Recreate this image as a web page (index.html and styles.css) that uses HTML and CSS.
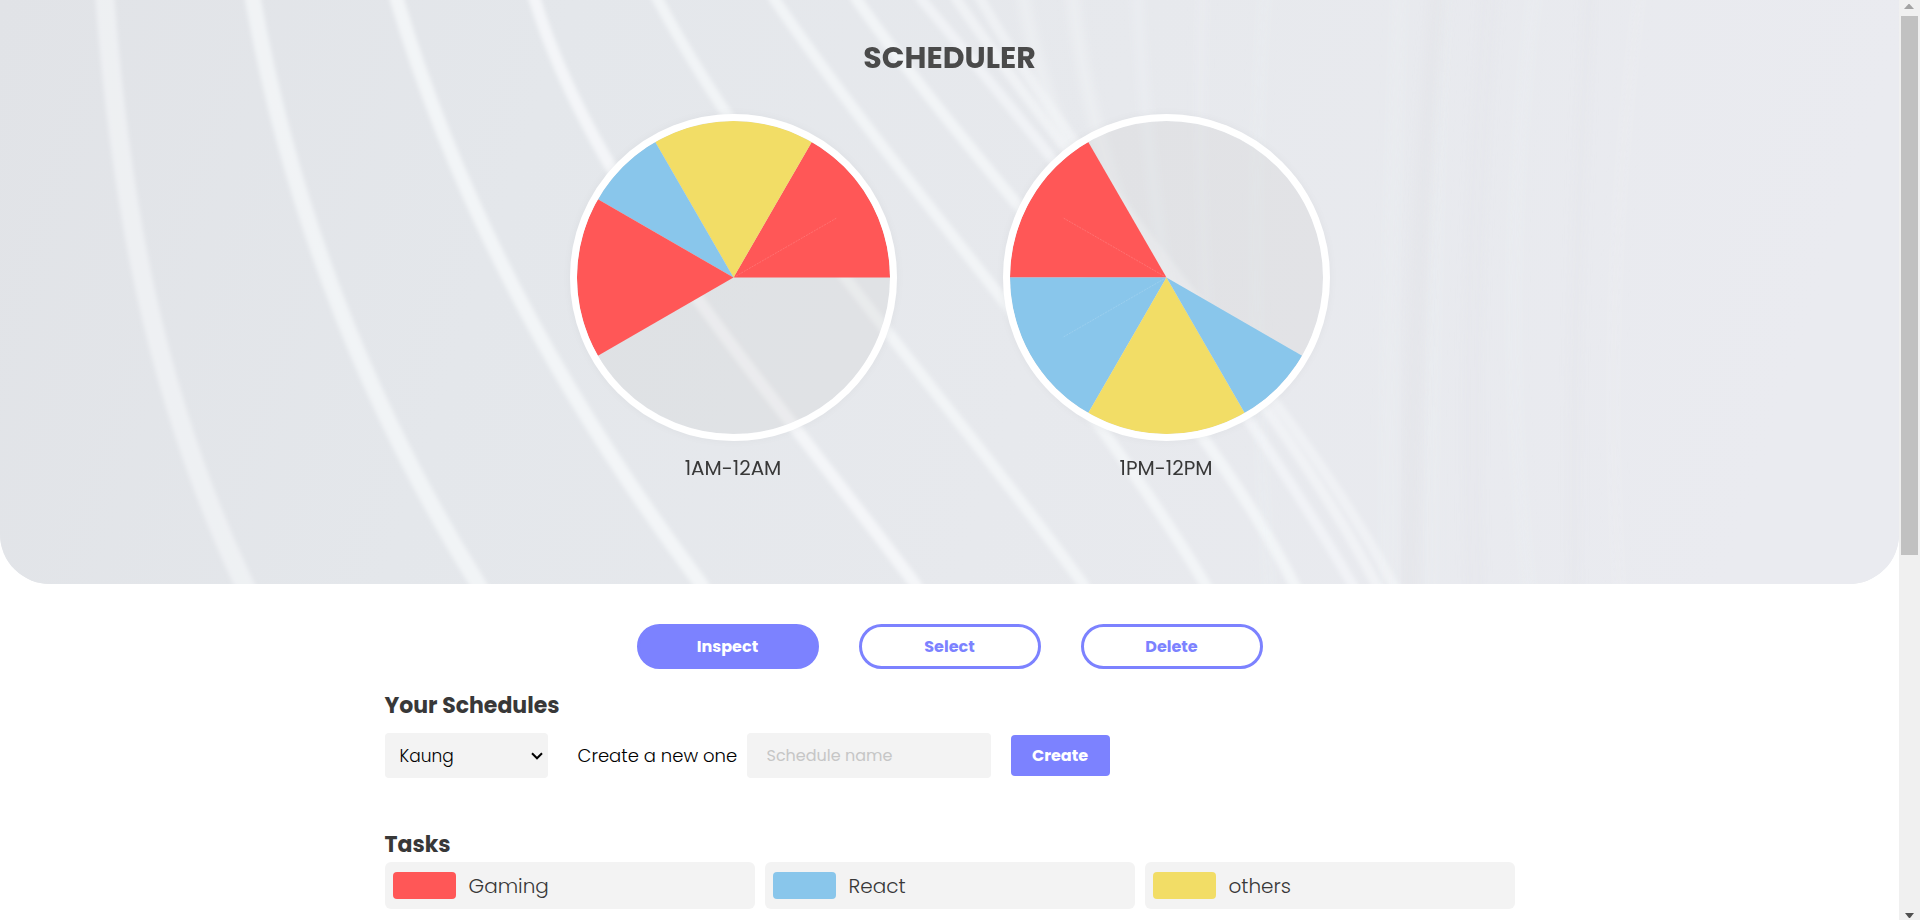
FILE: index.html
```html
<!DOCTYPE html>
<html lang="en">
<head>
<meta charset="utf-8">
<meta name="viewport" content="width=device-width, initial-scale=1">
<title>Scheduler</title>
<link rel="stylesheet" href="styles.css">
</head>
<body class="app">
<main class="page">
  <header class="hero">
    <svg class="hero-art" viewBox="0 0 1899 584" preserveAspectRatio="none" aria-hidden="true">
      <defs>
        <linearGradient id="base" x1="0" y1="0" x2="1" y2="0.1">
          <stop offset="0" stop-color="#e1e3e7"/>
          <stop offset="0.3" stop-color="#e4e7eb"/>
          <stop offset="0.6" stop-color="#e7e9ed"/>
          <stop offset="1" stop-color="#eaebf0"/>
        </linearGradient>
        <filter id="soft" x="-5%" y="-5%" width="110%" height="110%"><feGaussianBlur stdDeviation="2"/></filter>
        <filter id="haze" x="-5%" y="-5%" width="110%" height="110%"><feGaussianBlur stdDeviation="5"/></filter>
      </defs>
      <rect width="1899" height="584" fill="url(#base)"/>
      <g fill="none" stroke="#f7f9fb" filter="url(#soft)">
        <path stroke-width="19" opacity=".55" d="M105-10V0C120 195 152 389 244 584l5 10"/>
        <path stroke-width="16" opacity=".7" d="M253-10V0C288 195 357 389 478 584l5 10"/>
        <path stroke-width="14" opacity=".75" d="M395-10L397 0C455 195 555 389 701 584l5 10"/>
        <path stroke-width="12" opacity=".8" d="M531-10L535 0C594 195 770 389 915 584l5 10"/>
        <path stroke-width="11" opacity=".7" d="M653-10L658 0C762 195 941 389 1083 584l5 10"/>
        <path stroke-width="11" opacity=".7" d="M770-10L775 0C908 195 1090 389 1205 584l5 10"/>
        <path stroke-width="11" opacity=".7" d="M852-10L857 0C994 195 1195 389 1294 584l5 10"/>
        <path stroke-width="10" opacity=".6" d="M917-10L922 0C1085 195 1240 389 1352 584l5 10"/>
        <path stroke-width="10" opacity=".55" d="M952-10L957 0C1090 195 1275 389 1376 584l5 10"/>
        <path stroke-width="10" opacity=".5" d="M976-10L981 0C1092 195 1290 389 1393 584l5 10"/>
      </g>
      <g fill="none" stroke="#f4f6f8" filter="url(#haze)">
        <path stroke-width="12" opacity=".5" d="M1022-10Q1042 110 1100 210"/>
        <path stroke-width="12" opacity=".5" d="M1072-10Q1085 130 1150 280"/>
        <path stroke-width="10" opacity=".35" d="M1137-10Q1145 150 1170 300"/>
        <path stroke-width="10" opacity=".2" d="M1203-10Q1195 200 1215 400"/>
        <path stroke-width="12" opacity=".15" d="M1265-10Q1245 250 1270 600"/>
        <path stroke-width="16" opacity=".15" d="M1400-10Q1385 350 1388 600"/>
        <path stroke-width="12" opacity=".15" d="M1445-10Q1430 350 1432 600"/>
        <path stroke-width="14" opacity=".15" d="M1535-10Q1495 300 1530 600"/>
        <path stroke-width="12" opacity=".12" d="M1640-10Q1600 300 1620 600"/>
      </g>
      <g fill="none" stroke="#dee0e5" filter="url(#haze)">
        <path stroke-width="18" opacity=".25" d="M1440-10Q1412 250 1410 600"/>
        <path stroke-width="18" opacity=".15" d="M1490-10Q1465 300 1475 600"/>
        <path stroke-width="12" opacity=".15" d="M1590-10Q1570 300 1575 600"/>
      </g>
    </svg>
    <h1 class="title">SCHEDULER</h1>
    <div class="clocks">
      <figure class="clock">
        <svg class="pie" viewBox="-157 -157 314 314" role="img" aria-label="Morning schedule">
          <circle class="idle" r="157"/>
          <path class="gaming" d="M0 0H157A157 157 0 0 0 78.5-136Z"/>
          <path class="others" d="M0 0L78.5-136A157 157 0 0 0-78.5-136Z"/>
          <path class="react" d="M0 0L-78.5-136A157 157 0 0 0-136-78.5Z"/>
          <path class="gaming" d="M0 0L-136-78.5A157 157 0 0 0-136 78.5Z"/>
          <path class="seam" d="M0 0L104-60"/>
        </svg>
        <figcaption class="caption">1AM-12AM</figcaption>
      </figure>
      <figure class="clock">
        <svg class="pie" viewBox="-157 -157 314 314" role="img" aria-label="Afternoon schedule">
          <circle class="idle" r="157"/>
          <path class="gaming" d="M0 0L-78.5-136A157 157 0 0 0-157 0Z"/>
          <path class="react" d="M0 0H-157A157 157 0 0 0-78.5 136Z"/>
          <path class="others" d="M0 0L-78.5 136A157 157 0 0 0 78.5 136Z"/>
          <path class="react" d="M0 0L78.5 136A157 157 0 0 0 136 78.5Z"/>
          <path class="seam" d="M0 0L-104-60M0 0L-104 60"/>
        </svg>
        <figcaption class="caption">1PM-12PM</figcaption>
      </figure>
    </div>
  </header>

  <nav class="modes" aria-label="Mode">
    <button class="mode mode-active" type="button">Inspect</button>
    <button class="mode" type="button">Select</button>
    <button class="mode" type="button">Delete</button>
  </nav>

  <section class="section">
    <h2 class="heading">Your Schedules</h2>
    <form class="schedule-form">
      <div class="picker">
        <select class="field select" aria-label="Your schedule"><option>Kaung</option></select>
        <svg class="chevron" viewBox="0 0 12 8" aria-hidden="true"><path d="M1 1.300L6 6.300L11 1.300"/></svg>
      </div>
      <label class="form-label" for="schedule-name">Create a new one</label>
      <input class="field name" id="schedule-name" type="text" placeholder="Schedule name">
      <button class="create" type="button">Create</button>
    </form>
  </section>

  <section class="section">
    <h2 class="heading">Tasks</h2>
    <ul class="tasks">
      <li class="task"><span class="swatch swatch-gaming"></span>Gaming</li>
      <li class="task"><span class="swatch swatch-react"></span>React</li>
      <li class="task"><span class="swatch swatch-others"></span>others</li>
    </ul>
  </section>
</main>
<div class="scrollbar" aria-hidden="true">
  <svg class="arrow" viewBox="0 0 21 16"><path fill="#a3a3a3" d="M5 9L9.500 4H10.500L15 9Z"/></svg>
  <div class="thumb"></div>
  <div class="track"></div>
  <svg class="arrow" viewBox="0 0 21 16"><path fill="#505050" d="M6 9H15L11 14H10Z"/></svg>
</div>
</body>
</html>
```

FILE: styles.css
```css
* { box-sizing: border-box; }

.app {
  margin: 0;
  display: flex;
  align-items: flex-start;
  background: #fff;
  color: #383838;
  font-family: Poppins, Inter, "Open Sans", sans-serif;
}

.page { flex: 1; min-width: 0; }

.hero {
  position: relative;
  overflow: hidden;
  padding: 35px 20px 101px;
  border-radius: 0 0 50px 50px;
  background: #e6e8ec;
}

.hero-art { position: absolute; inset: 0; width: 100%; height: 100%; }

.title {
  position: relative;
  margin: 0 0 34px;
  text-align: center;
  font-size: 30px;
  line-height: 45px;
  font-weight: 700;
  color: #4a4a4a;
}

.clocks {
  position: relative;
  display: flex;
  flex-wrap: wrap;
  justify-content: center;
  gap: 30px 106px;
}

.clock { margin: 0; text-align: center; }

.pie {
  display: block;
  width: 327px;
  height: 327px;
  border: 7px solid #fff;
  border-radius: 50%;
  box-shadow: 0 0 10px rgba(0, 0, 0, 0.04);
}

.idle { fill: rgba(210, 210, 210, 0.26); }
.gaming { fill: #ff5757; }
.react { fill: #89c6eb; }
.others { fill: #f2dd66; }
.seam { fill: none; stroke: rgba(255, 255, 255, 0.16); stroke-width: 1; stroke-dasharray: 2 1; }

.caption {
  margin-top: 12px;
  font-size: 20px;
  line-height: 30px;
  font-weight: 400;
}

.modes {
  display: flex;
  flex-wrap: wrap;
  justify-content: center;
  gap: 20px 40px;
  padding: 40px 20px 20px;
}

.mode {
  width: 182px;
  height: 45px;
  padding: 0;
  border: 3px solid #7c82ff;
  border-radius: 23px;
  background: #fff;
  color: #7c82ff;
  font: inherit;
  font-size: 16px;
  font-weight: 700;
}

.mode-active { background: #7c82ff; color: #fff; }

.section { max-width: 1130px; margin: 0 auto 50px; }
.section:last-child { margin-bottom: 11px; }

.heading {
  margin: 0;
  font-size: 22px;
  line-height: 34px;
  font-weight: 700;
}

.schedule-form {
  display: flex;
  flex-wrap: wrap;
  align-items: center;
  margin-top: 10px;
}

.field {
  height: 45px;
  border: 0;
  border-radius: 4px;
  background: #f3f3f3;
  color: #000;
  font: inherit;
  font-size: 16px;
}

.picker { position: relative; width: 163px; margin-right: 30px; }
.select { width: 100%; padding: 0 30px 0 15px; appearance: none; font-size: 17px; font-weight: 300; }

.chevron {
  position: absolute;
  right: 5px;
  top: 19px;
  width: 12px;
  height: 8px;
  fill: none;
  stroke: #000;
  stroke-width: 2;
  pointer-events: none;
}

.form-label { width: 159px; margin-right: 10px; color: #000; font-size: 18px; font-weight: 300; white-space: nowrap; }
.name { width: 244px; margin-right: 20px; padding: 0 20px; }
.name::placeholder { color: #c6c6c6; opacity: 1; }

.create {
  width: 99px;
  height: 41px;
  padding: 0;
  border: 0;
  border-radius: 4px;
  background: #7c82ff;
  color: #fff;
  font: inherit;
  font-size: 16px;
  font-weight: 700;
}

.tasks {
  display: grid;
  grid-template-columns: repeat(3, 1fr);
  gap: 10px;
  margin: 0;
  padding: 0;
  list-style: none;
}

.task {
  display: flex;
  align-items: center;
  gap: 13px;
  height: 47px;
  padding: 0 8px;
  border-radius: 6px;
  background: #f3f3f3;
  font-size: 20px;
  line-height: 28px;
  font-weight: 300;
}

.swatch { width: 63px; height: 27px; border-radius: 4px; }
.swatch-gaming { background: #ff5757; }
.swatch-react { background: #89c6eb; }
.swatch-others { background: #f2dd66; }

.scrollbar {
  position: sticky;
  top: 0;
  display: flex;
  flex-direction: column;
  width: 21px;
  height: 100vh;
  background: #f0f0f0;
}

.arrow { display: block; width: 21px; height: 16px; }
.thumb { flex: 539; margin: 0 2px; background: #c1c1c1; }
.track { flex: 349; }
```
